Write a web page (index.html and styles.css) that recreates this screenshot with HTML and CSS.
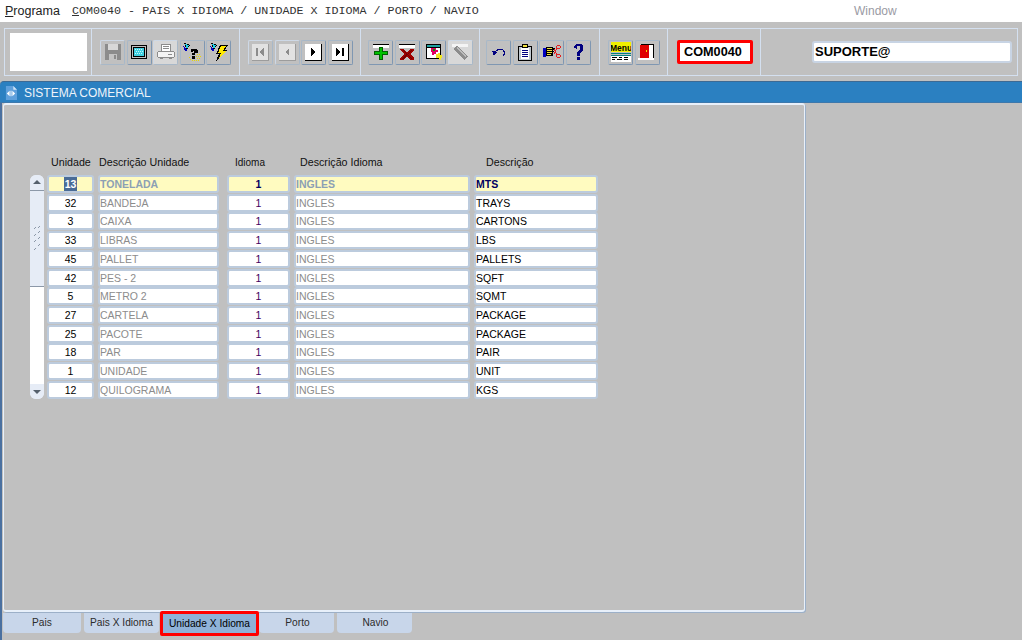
FILE: index.html
```html
<!DOCTYPE html>
<html lang="en">

<head>
    <meta charset="UTF-8" />
    <title>COM0040 - PAIS X IDIOMA</title>
    <link rel="stylesheet" href="styles.css">
</head>

<body>
    <div class="menubar">
        <span class="menu-program"><u>P</u>rograma</span>
        <span class="menu-title"><u>C</u>OM0040 - PAIS X IDIOMA / UNIDADE X IDIOMA / PORTO / NAVIO</span>
        <span class="menu-window">Window</span>
    </div>

    <div class="toolbar">
        <div class="tb-section sec-logo"><div class="logo-box"></div></div>

        <div class="tb-section sec-file">
            <div class="tb-btn off"><svg viewBox="0 0 18 18"><path d="M1 1h15l1 1v15H1z" fill="#8c8c8c"/><path d="M4 1h10v6H4z" fill="#d8d8d8"/><path d="M5 11h8v6H5z" fill="#c4c4c4"/><path d="M10 12h2v4h-2z" fill="#8c8c8c"/></svg></div>
            <div class="tb-btn"><svg viewBox="0 0 18 18"><path d="M1 2h16v14H1z" fill="#000"/><path d="M2 3h14v12H2z" fill="#c0c0c0"/><path d="M3 4h12v10H3z" fill="#000"/><path d="M4 5h10v8H4z" fill="#3fd0e0"/><path d="M5 6h1v1H5zm2 0h1v1H7zm2 0h1v1H9zm2 0h1v1h-1zM6 8h1v1H6zm2 0h1v1H8zm2 0h1v1h-1zm2 0h1v1h-1zM5 10h1v1H5zm2 0h1v1H7zm2 0h1v1H9zm2 0h1v1h-1z" fill="#c8f4fa"/></svg></div>
            <div class="tb-btn off light"><svg viewBox="0 0 18 18"><path d="M5 1h8v7H5z" fill="#fff"/><path d="M5 1h8v1H5zM6 3h6v1H6zM6 5h6v1H6zM4 1h1v7H4zM13 1h1v7h-1z" fill="#8c8c8c"/><path d="M1 8h16v6H1z" fill="#f4f4f4"/><path d="M1 8h16v1H1zM1 14h16v1H1zM0 9h1v5H0zM17 9h1v5h-1zM3 15h3v1H3zM12 15h3v1h-3zM11 11h4v1h-4z" fill="#8c8c8c"/></svg></div>
            <div class="tb-btn"><svg viewBox="0 0 18 18"><path d="M1 0l6 2-3 5z" fill="#000"/><path d="M2 1l4 1-2 4z" fill="#1fd0e8"/><path d="M0 3l5 4-3 1z" fill="#0000c0"/><path d="M8 6h6v1h1v3h-3v2H9v-2h2V8H10v1H8z" fill="#000"/><path d="M9 13h3v3H9z" fill="#000"/><path d="M14 11h1v1h-1zm2 0h1v1h-1zM13 13h1v1h-1zm2 0h1v1h-1zm2 0h1v1h-1zM6 14h1v1H6zM14 15h1v1h-1zm2 0h1v1h-1zM7 16h1v1H7zm2 1h1v1H9zm2 0h1v1h-1zm2 0h1v1h-1zm2 0h1v1h-1z" fill="#e8d800"/></svg></div>
            <div class="tb-btn"><svg viewBox="0 0 18 18"><path d="M1 0l6 2-3 5z" fill="#000"/><path d="M2 1l4 1-2 4z" fill="#1fd0e8"/><path d="M0 3l5 4-3 1z" fill="#0000c0"/><path d="M10 2h8l-3 5h3L6 18l3-7H6z" fill="#000"/><path d="M11 3h5l-3 5h3l-7 7 2-5H8z" fill="#ffe800"/></svg></div>
        </div>

        <div class="tb-section sec-nav">
            <div class="tb-btn off"><span class="page-icon"><svg viewBox="0 0 16 16"><path d="M4 4h2v8H4zM12 4v8L7 8z" fill="#8c8c8c"/></svg></span></div>
            <div class="tb-btn off"><span class="page-icon"><svg viewBox="0 0 16 16"><path d="M10 4v8L6 8z" fill="#8c8c8c"/></svg></span></div>
            <div class="tb-btn"><span class="page-icon on"><svg viewBox="0 0 16 16"><path d="M6 4v8l5-4z" fill="#000"/></svg></span></div>
            <div class="tb-btn"><span class="page-icon on"><svg viewBox="0 0 16 16"><path d="M4 4v8l5-4zM10 4h2v8h-2z" fill="#000"/></svg></span></div>
        </div>

        <div class="tb-section sec-edit">
            <div class="tb-btn"><svg viewBox="0 0 18 18"><path d="M1 2h16v3H1z" fill="#fff"/><path d="M1 1h16v1H1z" fill="#000"/><path d="M7 4h4v4h5v4h-5v5H7v-5H2V8h5z" fill="#006000"/><path d="M8 5h2v4h5v2h-5v5H8v-5H3V9h5z" fill="#00c000"/></svg></div>
            <div class="tb-btn"><svg viewBox="0 0 18 18"><path d="M1 2h16v3H1z" fill="#fff"/><path d="M1 1h16v1H1z" fill="#000"/><path d="M2 6h3l4 3 4-3h3v1l-4 4 4 4v2h-3l-4-3-4 3H2v-2l4-4-4-4z" fill="#a00000"/><path d="M4 7h1l4 4 4-4h1l-4 4 4 5h-1l-4-4-4 4H4l4-5z" fill="#700000"/></svg></div>
            <div class="tb-btn"><svg viewBox="0 0 18 18"><path d="M1 1h15v15H1z" fill="#000"/><path d="M2 2h13v2H2z" fill="#20a0a0"/><path d="M2 5h13v10H2z" fill="#fff"/><path d="M6 5h5v2h2v2h-2v2H9v1H7V9H6z" fill="#e00060"/><path d="M8 6h2v2H8z" fill="#00a000"/><path d="M11 11h2v-1h2v2h2v3h-1v2h-2v-2h-3z" fill="#f0e820"/></svg></div>
            <div class="tb-btn off light"><svg viewBox="0 0 18 18"><path d="M1 1h16v3H1z" fill="#f4f4f4"/><path d="M2 6l4-3 11 10-4 4z" fill="#8c8c8c"/><path d="M5 5l1-1 9 9-1 1z" fill="#bcbcbc"/></svg></div>
        </div>

        <div class="tb-section sec-tools">
            <div class="tb-btn"><svg viewBox="0 0 18 18"><path d="M5 9C7 6 12 5 14 8c1 2 0 4-1 5" fill="none" stroke="#000080" stroke-width="1.200"/><path d="M2 8l5 1-3 4z" fill="#000080"/></svg></div>
            <div class="tb-btn"><svg viewBox="0 0 18 18"><path d="M2 3h14v15H2z" fill="#000"/><path d="M3 4h12v13H3z" fill="#c0c8d0"/><path d="M5 5h8v11H5z" fill="#fff"/><path d="M6 7h6v1H6zM6 9h6v1H6zM6 11h6v1H6zM6 13h6v1H6z" fill="#000080"/><path d="M6 1h6v4H6z" fill="#000"/><path d="M7 2h4v2H7z" fill="#f0e040"/></svg></div>
            <div class="tb-btn"><svg viewBox="0 0 18 18"><path d="M0 5h3v9H0z" fill="#0000c0"/><path d="M3 4h7v1h2v2h-2v6H3z" fill="#000"/><path d="M4 5h5v1H4zM4 7h5v1H4zM4 9h5v1H4zM4 11h4v1H4z" fill="#f0e040"/><path d="M10 8h1v1h-1z" fill="#000"/><circle cx="15.500" cy="4" r="1.800" fill="none" stroke="#e02020"/><circle cx="15.500" cy="13" r="1.800" fill="none" stroke="#e02020"/><path d="M11 6l3 6M11 11l3-6" stroke="#e02020" fill="none"/></svg></div>
            <div class="tb-btn"><svg viewBox="0 0 18 18"><path d="M5 5V3l2-2h5l2 2v5l-3 2v3H8V9l3-2V3H8v3z" fill="#000080"/><path d="M8 14h3v3H8z" fill="#000080"/></svg></div>
        </div>

        <div class="tb-section sec-menu">
            <div class="tb-btn"><svg class="icon-wide" viewBox="0 0 20 20"><path d="M0 0h20v10H0z" fill="#f0f000"/><text class="menu-icon-text" x="10" y="8.500" text-anchor="middle">Menu</text><path d="M0 11h20v1H0zM0 13h20v1H0z" fill="#008080"/><path d="M0 14h20v6H0z" fill="#fff"/><path d="M1 15h5v1H1zM8 15h3v1H8zM13 15h4v1h-4zM1 17h3v1H1zM6 17h5v1H6zM13 17h4v1h-4z" fill="#000"/></svg></div>
            <div class="tb-btn"><svg viewBox="0 0 18 18"><path d="M3 1h13v15H3z" fill="#000"/><path d="M7 2h8v13H7z" fill="#fff"/><path d="M2 2h9v13H2z" fill="#e00000"/><path d="M8 7h1v2H8z" fill="#f0e000"/><path d="M0 15h16v2H0z" fill="#fff"/></svg></div>
        </div>

        <div class="tb-section sec-code"><div class="code-box">COM0040</div></div>

        <div class="tb-section sec-user"><div class="user-box">SUPORTE@</div></div>
    </div>

    <div class="title-bar">
        <svg class="title-icon" viewBox="0 0 13 15"><path d="M1 0h8l4 4v11H1z" fill="#5fa0dc"/><path d="M9 0l4 4H9z" fill="#cfe4f8"/><path d="M2 8l3-3v6zM11 8L8 5v6zM6 5h1v6H6z" fill="#fff"/></svg>
        <span>SISTEMA COMERCIAL</span>
    </div>

    <div class="workspace">
        <div class="panel">
            <div class="grid-wrap">
                <div class="col-heads">
                    <span class="h-uni">Unidade</span>
                    <span class="h-desc">Descrição Unidade</span>
                    <span class="h-idi">Idioma</span>
                    <span class="h-desi">Descrição Idioma</span>
                    <span class="h-text">Descrição</span>
                </div>
                <div class="grid-body">
                    <div class="scrollbar">
                        <div class="arrow up"></div>
                        <div class="thumb"><svg class="grip" viewBox="0 0 10 28"><path d="M4 2L2 4M8 1L6 3M4 9L2 11M8 6L6 8M4 15L2 17M8 12L6 14M4 23L2 25M8 19L6 21" stroke="#8c98a8" fill="none"/></svg></div>
                        <div class="track"></div>
                        <div class="arrow down"></div>
                    </div>
                    <div class="rows">
                        <div class="row current">
                            <div class="cell c-uni"><span class="caret">13</span></div><div class="cell c-desc">TONELADA</div><div class="cell c-idi">1</div><div class="cell c-desi">INGLES</div><div class="cell c-text">MTS</div>
                        </div>
                        <div class="row"><div class="cell c-uni">32</div><div class="cell c-desc">BANDEJA</div><div class="cell c-idi">1</div><div class="cell c-desi">INGLES</div><div class="cell c-text">TRAYS</div></div>
                        <div class="row"><div class="cell c-uni">3</div><div class="cell c-desc">CAIXA</div><div class="cell c-idi">1</div><div class="cell c-desi">INGLES</div><div class="cell c-text">CARTONS</div></div>
                        <div class="row"><div class="cell c-uni">33</div><div class="cell c-desc">LIBRAS</div><div class="cell c-idi">1</div><div class="cell c-desi">INGLES</div><div class="cell c-text">LBS</div></div>
                        <div class="row"><div class="cell c-uni">45</div><div class="cell c-desc">PALLET</div><div class="cell c-idi">1</div><div class="cell c-desi">INGLES</div><div class="cell c-text">PALLETS</div></div>
                        <div class="row"><div class="cell c-uni">42</div><div class="cell c-desc">PES - 2</div><div class="cell c-idi">1</div><div class="cell c-desi">INGLES</div><div class="cell c-text">SQFT</div></div>
                        <div class="row"><div class="cell c-uni">5</div><div class="cell c-desc">METRO 2</div><div class="cell c-idi">1</div><div class="cell c-desi">INGLES</div><div class="cell c-text">SQMT</div></div>
                        <div class="row"><div class="cell c-uni">27</div><div class="cell c-desc">CARTELA</div><div class="cell c-idi">1</div><div class="cell c-desi">INGLES</div><div class="cell c-text">PACKAGE</div></div>
                        <div class="row"><div class="cell c-uni">25</div><div class="cell c-desc">PACOTE</div><div class="cell c-idi">1</div><div class="cell c-desi">INGLES</div><div class="cell c-text">PACKAGE</div></div>
                        <div class="row"><div class="cell c-uni">18</div><div class="cell c-desc">PAR</div><div class="cell c-idi">1</div><div class="cell c-desi">INGLES</div><div class="cell c-text">PAIR</div></div>
                        <div class="row"><div class="cell c-uni">1</div><div class="cell c-desc">UNIDADE</div><div class="cell c-idi">1</div><div class="cell c-desi">INGLES</div><div class="cell c-text">UNIT</div></div>
                        <div class="row"><div class="cell c-uni">12</div><div class="cell c-desc">QUILOGRAMA</div><div class="cell c-idi">1</div><div class="cell c-desi">INGLES</div><div class="cell c-text">KGS</div></div>
                    </div>
                </div>
            </div>
        </div>

        <div class="tabs">
            <div class="tab t-pais">Pais</div>
            <div class="tab t-paisid">Pais X Idioma</div>
            <div class="tab active">Unidade X Idioma</div>
            <div class="tab t-porto">Porto</div>
            <div class="tab t-navio">Navio</div>
        </div>
    </div>
</body>

</html>
```

FILE: styles.css
```css
html,
body {
    margin: 0;
    padding: 0;
    height: 100%;
}

body {
    width: 1022px;
    height: 640px;
    overflow: hidden;
    background: #c0c0c0;
    font-family: 'Liberation Sans', Arial, sans-serif;
    font-size: 11px;
    color: #000;
}

/* Menu bar */
.menubar {
    display: flex;
    align-items: center;
    height: 22px;
    background: #fff;
    white-space: nowrap;
}

.menu-program {
    width: 67px;
    padding-left: 5px;
    font-size: 12.500px;
    color: #222;
}

.menu-title {
    width: 782px;
    font-family: 'Liberation Mono', 'Courier New', monospace;
    font-size: 11.700px;
    color: #333;
}

.menu-window {
    font-size: 12px;
    color: #9a9aa4;
}

/* Toolbar */
.toolbar {
    display: flex;
    height: 46px;
    margin: 6px 4px 0;
    border: 1px solid #d4e0f0;
}

.tb-section {
    display: flex;
    align-items: center;
    gap: 1.500px;
    border-right: 1px solid #d4e0f0;
    box-sizing: border-box;
}

.sec-logo {
    width: 87px;
    padding-left: 5px;
}

.logo-box {
    width: 77px;
    height: 38px;
    background: #fff;
}

.sec-file {
    width: 148px;
    padding-left: 8px;
}

.sec-nav {
    width: 121px;
    padding-left: 8px;
}

.sec-edit {
    width: 119px;
    padding-left: 7px;
}

.sec-tools {
    width: 120px;
    padding-left: 6px;
}

.sec-menu {
    width: 68px;
    padding-left: 8px;
}

.sec-code {
    width: 93px;
    padding-left: 9px;
}

.sec-user {
    flex: 1;
    padding-left: 51px;
    border-right: 0;
}

.tb-btn {
    display: flex;
    align-items: center;
    justify-content: center;
    box-sizing: border-box;
    width: 25px;
    height: 25px;
    border: 1px solid;
    border-color: #a8b8c8 #7f97b2 #7f97b2 #a8b8c8;
    border-radius: 2px;
}

.tb-btn svg {
    width: 18px;
    height: 18px;
    shape-rendering: crispEdges;
}

.tb-btn svg.icon-wide {
    width: 20px;
    height: 20px;
}

.tb-btn.off {
    border-color: #cdd8e6 #a8b8c8 #a8b8c8 #cdd8e6;
}

.tb-btn.light {
    background: #d8d8d8;
}

.page-icon {
    display: flex;
    width: 16px;
    height: 16px;
    background: #e2e2e2;
    border-right: 1px solid #9c9c9c;
    border-bottom: 1px solid #9c9c9c;
}

.page-icon.on {
    background: #fff;
    border-color: #000;
}

.page-icon svg {
    width: 16px;
    height: 16px;
}

.menu-icon-text {
    font-size: 8.500px;
    font-weight: bold;
    fill: #000;
}

.code-box {
    box-sizing: border-box;
    width: 76px;
    height: 24px;
    padding-left: 4px;
    background: #fff;
    border: 3px solid #f00;
    border-radius: 2px;
    font-size: 12.700px;
    font-weight: bold;
    line-height: 18px;
}

.user-box {
    box-sizing: border-box;
    width: 200px;
    height: 22px;
    padding-left: 1px;
    background: #fff;
    border: 2px solid #c8d4e4;
    border-radius: 3px;
    font-size: 13px;
    font-weight: bold;
    line-height: 18px;
}

/* Blue title bar */
.title-bar {
    display: flex;
    align-items: center;
    gap: 7px;
    box-sizing: border-box;
    height: 22px;
    margin-top: 5px;
    padding: 1px 0 0 5px;
    background: #2b80c1;
    border-top: 1px solid #3d6a94;
    border-bottom: 1px solid #3d78ac;
    border-top-left-radius: 4px;
    color: #eef4fa;
    font-size: 12px;
}

.title-icon {
    width: 12px;
    height: 14px;
}

/* Work area */
.workspace {
    box-sizing: border-box;
    height: 537px;
    border-left: 2px solid #4a70a0;
}

.panel {
    box-sizing: border-box;
    width: 802px;
    height: 509px;
    margin-left: 1px;
    background: #c0c0c0;
    border: 1px solid #e8f0fa;
    border-top-width: 2px;
    border-bottom-width: 2px;
    border-radius: 3px;
    box-shadow: 1px 1px 0 #9cb0c8;
}

.grid-wrap {
    padding: 50px 0 0 26px;
}

.col-heads {
    display: flex;
    align-items: baseline;
    height: 18px;
    font-size: 10.700px;
    color: #111;
    white-space: nowrap;
}

.h-uni {
    width: 48px;
    padding-left: 21px;
}

.h-desc {
    width: 136px;
}

.h-idi {
    width: 65px;
    font-size: 10px;
}

.h-desi {
    width: 186px;
}

.grid-body {
    display: flex;
    margin-top: 2px;
}

.h-uni,
.h-desc,
.h-idi,
.h-desi,
.h-text {
    display: block;
    line-height: 14px;
}

/* Scrollbar */
.scrollbar {
    display: flex;
    flex-direction: column;
    width: 14px;
    height: 224px;
    margin-right: 3px;
    background: #e6ecf6;
    border-radius: 6px;
    overflow: hidden;
}

.arrow {
    position: relative;
    height: 15px;
    background: #e6ecf6;
}

.arrow::after {
    content: "";
    position: absolute;
    left: 3px;
    width: 0;
    height: 0;
    border-left: 4px solid transparent;
    border-right: 4px solid transparent;
}

.arrow.up::after {
    top: 5px;
    border-bottom: 4px solid #55606c;
}

.arrow.down::after {
    top: 6px;
    border-top: 4px solid #55606c;
}

.thumb {
    display: flex;
    align-items: center;
    justify-content: center;
    box-sizing: border-box;
    height: 97px;
    background: #e6ecf6;
    border-top: 1px solid #8c98a8;
    border-bottom: 1px solid #8c98a8;
}

.grip {
    width: 10px;
    height: 28px;
}

.track {
    flex: 1;
    background: #fff;
}

/* Rows */
.rows {
    display: grid;
    grid-auto-rows: 18px;
    row-gap: 0.730px;
}

.row {
    display: flex;
}

.cell {
    box-sizing: border-box;
    height: 18px;
    background: #fff;
    border: 2px solid #bccbdd;
    border-radius: 3px;
    font-size: 10.500px;
    line-height: 14px;
    white-space: nowrap;
}

.c-uni {
    width: 47px;
    text-align: center;
}

.c-desc {
    width: 121px;
    margin-left: 4px;
    color: #8c8c8c;
}

.c-idi {
    width: 63px;
    margin-left: 8px;
    text-align: center;
    color: #400060;
}

.c-desi {
    width: 176px;
    margin-left: 4px;
    color: #8c8c8c;
}

.c-text {
    width: 124px;
    margin-left: 4px;
}

.row.current .cell {
    background: #fffbc0;
    font-weight: bold;
}

.row.current .c-idi,
.row.current .c-text {
    color: #000060;
}

.row.current .c-desc,
.row.current .c-desi {
    color: #8ca0b4;
}

.caret {
    display: inline-block;
    padding: 0 1px;
    background: #4a6b96;
    color: #fff;
}

/* Tabs */
.tabs {
    display: flex;
    margin: 1px 0 0 1px;
    height: 24px;
    align-items: flex-start;
}

.tab {
    box-sizing: border-box;
    height: 20px;
    background: #c8d6ea;
    border-radius: 0 0 4px 4px;
    text-align: center;
    font-size: 10.200px;
    line-height: 20px;
    color: #2c2c2c;
}

.t-pais {
    width: 78px;
    margin-right: 3px;
}

.t-paisid {
    width: 75px;
    margin-right: 1px;
}

.tab.active {
    width: 99px;
    height: 25px;
    margin-top: -2px;
    background: #8fb2d8;
    border: 3px solid #f00;
    border-radius: 2px;
    line-height: 19px;
    color: #000;
}

.t-porto {
    width: 75px;
    margin-right: 3px;
    padding-left: 2px;
}

.t-navio {
    width: 75px;
    padding-left: 2px;
}
```
